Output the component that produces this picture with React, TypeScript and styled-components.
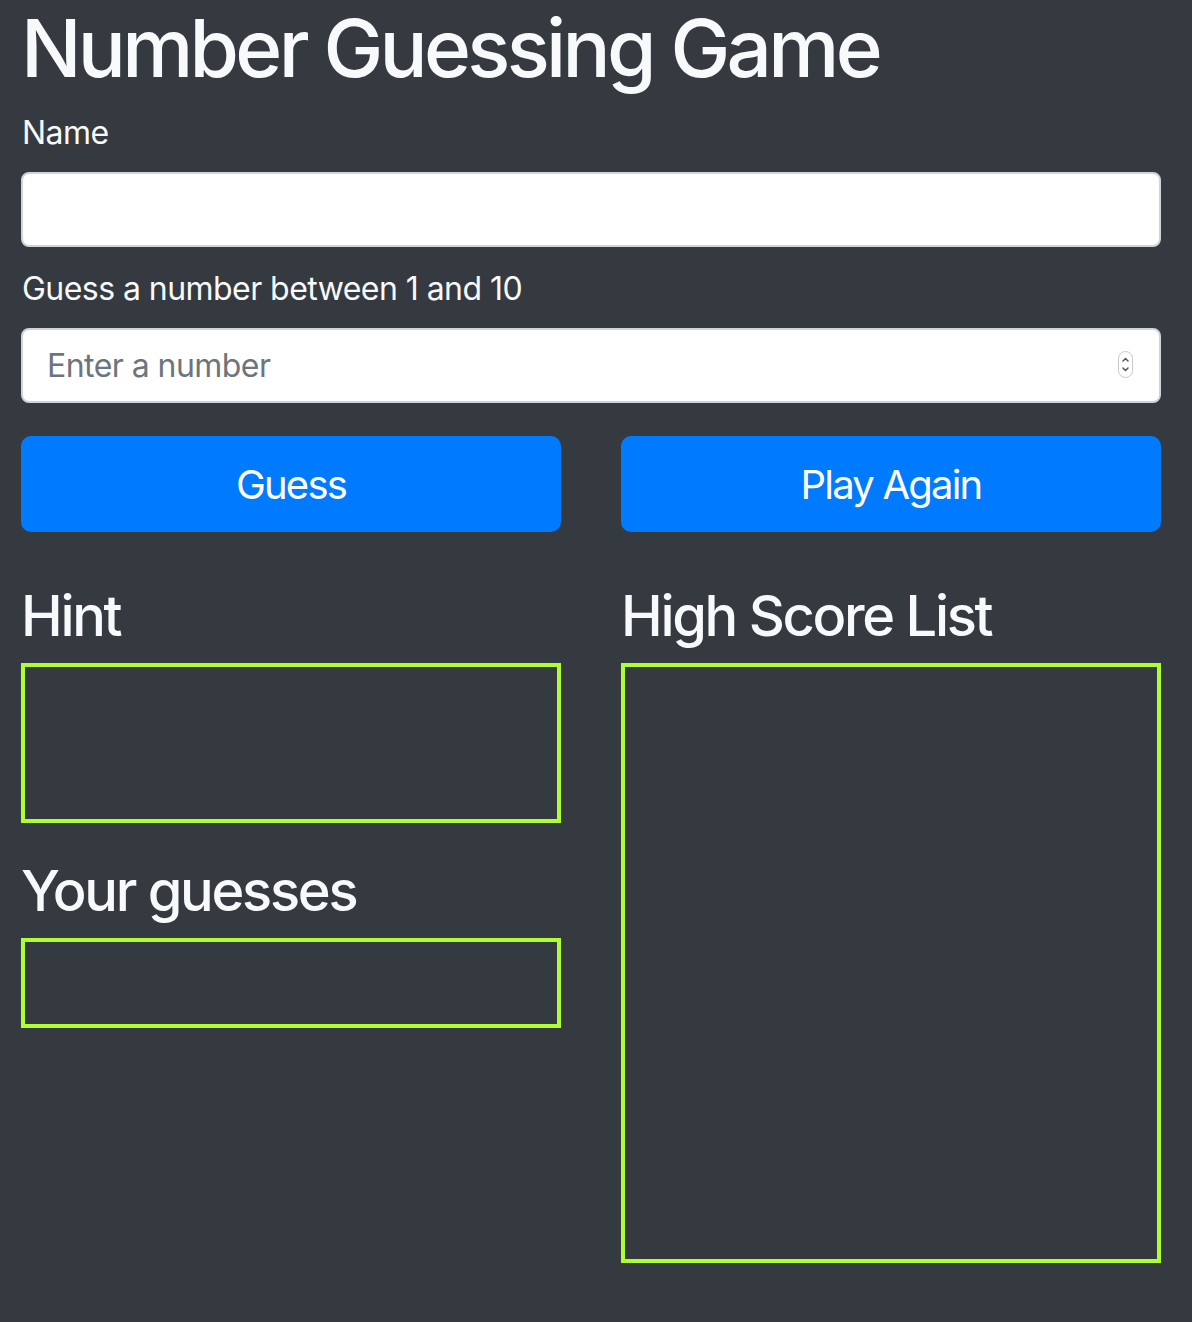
import React from "react";
import styled, { createGlobalStyle } from "styled-components";

const Global = createGlobalStyle`
  html, body { margin: 0; padding: 0; background: #343a40; }
  * { box-sizing: border-box; }
  body { font-family: Inter, "Noto Sans", "Liberation Sans", sans-serif; color: #f8f9fa; }
`;

const Page = styled.div`
  min-height: 1322px;
  background: #343a40;
  padding: 0 31px 0 21px;
`;

const Title = styled.h1`
  margin: 0 0 13px;
  font-size: 80px;
  line-height: 96px;
  font-weight: 500;
  letter-spacing: -3.7px;
  color: #f8f9fa;
`;

const Label = styled.label<{ $top?: number }>`
  display: block;
  font-size: 32px;
  line-height: 48px;
  font-weight: 400;
  margin: ${(p) => p.$top ?? 0}px 0 15px 1px;
  color: #f8f9fa;
  letter-spacing: -0.55px;
`;

const Field = styled.div`
  position: relative;
`;

const Input = styled.input`
  display: block;
  width: 100%;
  height: 75px;
  padding: 0 24px;
  border: 2px solid #ced4da;
  border-radius: 8px;
  background: #fff;
  font-family: inherit;
  font-size: 32px;
  color: #495057;
  letter-spacing: -0.55px;
  outline: none;
  -moz-appearance: textfield;
  &::-webkit-outer-spin-button,
  &::-webkit-inner-spin-button {
    -webkit-appearance: none;
    margin: 0;
  }
  &::placeholder { color: #6c757d; }
`;

const Spinner = styled.span`
  position: absolute;
  right: 28px;
  top: 23px;
  width: 15px;
  height: 27px;
  border: 1px solid #c8c8c8;
  border-radius: 8px;
  display: flex;
  align-items: center;
  justify-content: center;
  background: #fff;
`;

const Columns = styled.div`
  display: grid;
  grid-template-columns: 1fr 1fr;
  column-gap: 60px;
`;

const Column = styled.div`
  display: flex;
  flex-direction: column;
`;

const ButtonRow = styled(Columns)`
  margin-top: 33px;
`;

const Button = styled.button`
  height: 96px;
  border: none;
  border-radius: 10px;
  background: #007bff;
  color: #fff;
  font-family: inherit;
  font-size: 40px;
  font-weight: 400;
  letter-spacing: -1.8px;
  cursor: pointer;
`;

const Heading = styled.h3<{ $top: number }>`
  margin: ${(p) => p.$top}px 0 13px;
  font-size: 56px;
  line-height: 67px;
  font-weight: 500;
  letter-spacing: -2.3px;
  color: #f8f9fa;
`;

const Box = styled.div<{ $h: number }>`
  height: ${(p) => p.$h}px;
  border: 4px solid #adff2f;
`;

export default function App() {
  return (
    <>
      <Global />
      <Page>
        <Title>Number Guessing Game</Title>
        <Label htmlFor="name">Name</Label>
        <Input id="name" type="text" />
        <Label htmlFor="guess" $top={18}>Guess a number between 1 and 10</Label>
        <Field>
          <Input id="guess" type="number" placeholder="Enter a number" />
          <Spinner>
            <svg width="11" height="21" viewBox="0 0 11 21" fill="none" stroke="#555" strokeWidth="1.5" strokeLinecap="round" strokeLinejoin="round">
              <path d="M3 7 L5.5 4.5 L8 7" />
              <path d="M3 14 L5.5 16.5 L8 14" />
            </svg>
          </Spinner>
        </Field>
        <ButtonRow>
          <Button>Guess</Button>
          <Button>Play Again</Button>
        </ButtonRow>
        <Columns>
          <Column>
            <Heading $top={51}>Hint</Heading>
            <Box $h={160} />
            <Heading $top={35}>Your guesses</Heading>
            <Box $h={90} />
          </Column>
          <Column>
            <Heading $top={51}>High Score List</Heading>
            <Box $h={600} />
          </Column>
        </Columns>
      </Page>
    </>
  );
}
